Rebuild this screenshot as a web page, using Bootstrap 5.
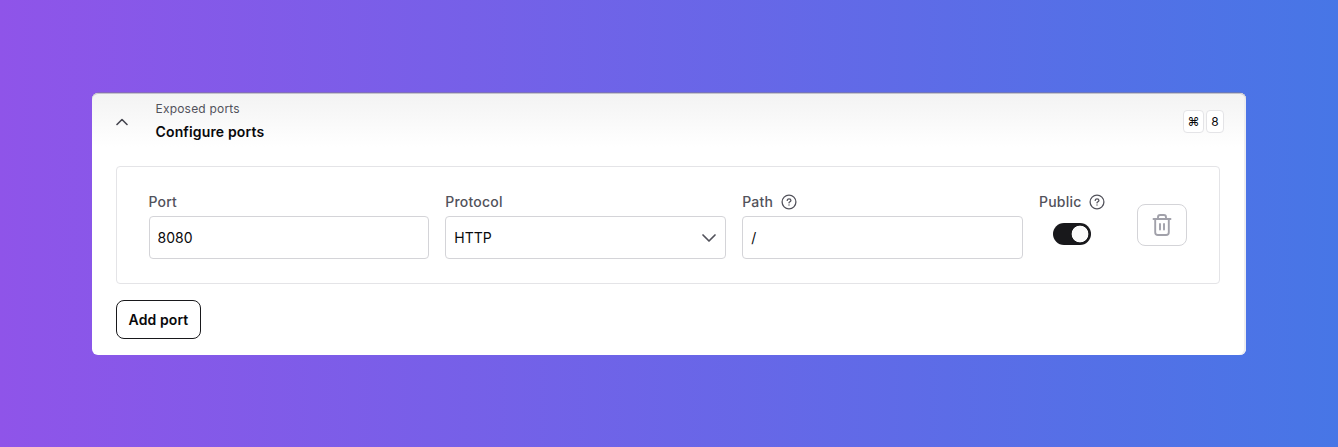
<!DOCTYPE html>
<html lang="en">
<head>
<meta charset="utf-8">
<title>Configure ports</title>
<link href="https://cdn.jsdelivr.net/npm/bootstrap@5.3.0/dist/css/bootstrap.min.css" rel="stylesheet">
<style>
body{font-family:Inter,"Liberation Sans",sans-serif;font-size:14px;line-height:20px;color:#18181b;height:447px;overflow:hidden;background:linear-gradient(90deg,#8f54e9,#4776e6)}
svg{display:block;fill:none;stroke:currentColor;stroke-linecap:round;stroke-linejoin:round}
.panel{margin:93px 92px 0;height:262px;border-radius:6px;box-shadow:inset -2px 0 #ededf0}
.panel-top{height:54px;padding:0 22px 0 24px;background:linear-gradient(#f3f3f3,#fff);border-radius:6px 6px 0 0;box-shadow:inset 0 1px #c4c4ca,inset -2px 0 #ededf0,0 -1px 0 -.5px #85808f}
.chevron{margin:3px 27.5px 0 0;color:#45454f}
.eyebrow{font-size:12px;line-height:16px;letter-spacing:.2px;color:#52525b;margin-top:8px}
.heading{font-size:14px;line-height:20px;font-weight:600;letter-spacing:.15px;margin:5px 0 0;color:#09090b}
.key{height:23px;border:1px solid #e4e4e7;border-radius:4px;font-size:12px;background:#fff;margin-top:3px;color:#09090b}
.port-row{margin:19px 26px 0 24px;height:118px;border:1px solid #e4e4e7;border-radius:4px;padding:25px 32px 0 31.5px}
.form-label{color:#52525b;font-weight:500;letter-spacing:.2px;margin:0 0 4px;height:20px}
.field{flex:0 0 280.85px}
.field .form-control,.field .form-select{height:43px;border-color:#d4d4d8;border-radius:4px;padding:0 8px;font-size:14px;color:#09090b;background-color:#fff}
.field .form-select{background-image:url("data:image/svg+xml,%3Csvg xmlns='http://www.w3.org/2000/svg' viewBox='0 0 16 16'%3E%3Cpath d='M2 5l6 6 6-6' fill='none' stroke='%2352525b' stroke-width='1.7' stroke-linecap='round' stroke-linejoin='round'/%3E%3C/svg%3E");background-position:right 8px center;background-size:16px}
.toggle-slot{padding-top:7px}
.form-switch .form-check-input{width:38px;height:22px;margin:0 0 0 14px;border:0;background-color:#18181b;background-image:radial-gradient(circle at 27px 11px,#fafafa 8px,transparent 8.7px);background-position:0 0;background-size:100%}
.trash{width:50px;height:42px;border:1px solid #d4d4d8;border-radius:8px;color:#a1a1aa;margin:12px 0 0 auto;padding:0}
.add{margin:16px 0 0 24px;width:85px;height:39px;border:1px solid #18181b;border-radius:8px;font-size:14px;font-weight:600;letter-spacing:.1px;padding:0;color:#09090b}
</style>
</head>
<body>
<svg class="d-none"><symbol id="help" viewBox="0 0 16 16"><circle cx="8" cy="8" r="6.9"/><path d="M6.2 6.4C6.4 5.3 7.1 4.8 8 4.8c1.1 0 1.9.6 1.9 1.6 0 1.3-1.8 1.4-1.9 2.5M8 11v.1"/></symbol></svg>
<main class="panel bg-white">
  <header class="panel-top d-flex align-items-start">
    <div class="d-flex align-items-center align-self-stretch chevron"><svg width="12" height="8" viewBox="0 0 12 8" stroke-width="1.6"><path d="M1 6.5l5-5 5 5"/></svg></div>
    <div class="flex-grow-1">
      <div class="eyebrow">Exposed ports</div>
      <h1 class="heading">Configure ports</h1>
    </div>
    <div class="d-flex align-items-center align-self-stretch" style="gap:2px">
      <span class="key d-flex align-items-center justify-content-center" style="width:21px">⌘</span>
      <span class="key d-flex align-items-center justify-content-center" style="width:18px">8</span>
    </div>
  </header>
  <section class="port-row d-flex align-items-start">
    <div class="d-flex gap-3">
      <div class="field"><label class="form-label d-block" for="port">Port</label><input id="port" class="form-control" value="8080"></div>
      <div class="field"><label class="form-label d-block" for="protocol">Protocol</label><select id="protocol" class="form-select"><option>HTTP</option></select></div>
      <div class="field"><label class="form-label d-flex align-items-center gap-2" for="path">Path <svg width="16" height="16" stroke-width="1.3"><use href="#help"/></svg></label><input id="path" class="form-control" value="/"></div>
      <div><label class="form-label d-flex align-items-center gap-2" for="public">Public <svg width="16" height="16" stroke-width="1.3"><use href="#help"/></svg></label><div class="form-switch ps-0 pb-0 toggle-slot"><input id="public" class="form-check-input float-none d-block" type="checkbox" role="switch" checked></div></div>
    </div>
    <button class="trash btn d-flex align-items-center justify-content-center flex-shrink-0" aria-label="Remove port"><svg width="20" height="24" viewBox="0 0 20 24" stroke-width="1.9"><path d="M1.5 6h17M6 6V4.2q0-2.2 2.2-2.2h3.6Q14 2 14 4.2V6M3.2 6v13.2q0 2.8 2.8 2.8h8q2.8 0 2.8-2.8V6M8 11v5.5M12 11v5.5"/></svg></button>
  </section>
  <button class="add btn">Add port</button>
</main>
<script src="https://cdn.jsdelivr.net/npm/bootstrap@5.3.0/dist/js/bootstrap.bundle.min.js"></script>
</body>
</html>
